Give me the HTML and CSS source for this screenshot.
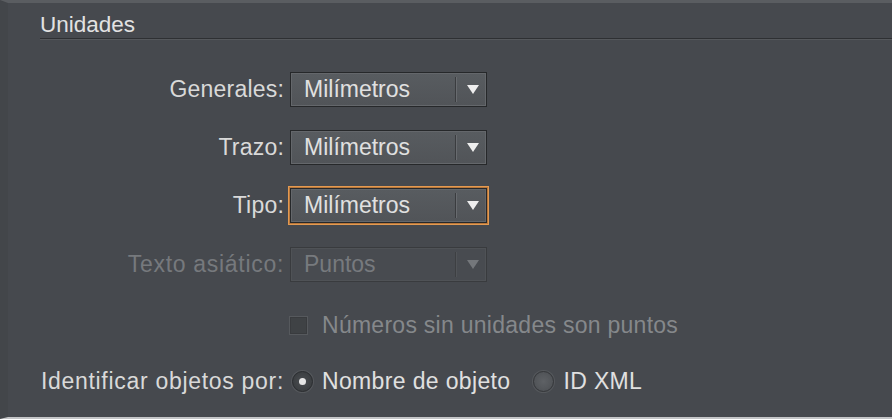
FILE: index.html
```html
<!DOCTYPE html>
<html lang="es">
<head>
<meta charset="utf-8">
<title>Unidades</title>
<link rel="stylesheet" href="styles.css">
</head>
<body>
<div class="panel">
  <div class="header"><span class="title">Unidades</span></div>
  <div class="form">
    <div class="row r1">
      <span class="label">Generales:</span>
      <div class="select"><span class="value">Milímetros</span><span class="arrow-cell"><span class="arrow"></span></span></div>
    </div>
    <div class="row r2">
      <span class="label">Trazo:</span>
      <div class="select"><span class="value">Milímetros</span><span class="arrow-cell"><span class="arrow"></span></span></div>
    </div>
    <div class="row r3">
      <span class="label">Tipo:</span>
      <div class="select focused"><span class="value">Milímetros</span><span class="arrow-cell"><span class="arrow"></span></span></div>
    </div>
    <div class="row r4 disabled">
      <span class="label asian">Texto asiático:</span>
      <div class="select"><span class="value">Puntos</span><span class="arrow-cell"><span class="arrow"></span></span></div>
    </div>
    <div class="row r5 disabled">
      <span class="label"></span>
      <span class="checkbox"></span>
      <span class="check-text">Números sin unidades son puntos</span>
    </div>
    <div class="row r6">
      <span class="label wide">Identificar objetos por:</span>
      <span class="radio checked"></span>
      <span class="radio-text">Nombre de objeto</span>
      <span class="radio second"></span>
      <span class="radio-text">ID XML</span>
    </div>
  </div>
</div>
</body>
</html>
```

FILE: styles.css
```css
html, body {
  margin: 0;
  padding: 0;
  background: #46494e;
}

body {
  width: 892px;
  height: 419px;
  overflow: hidden;
  font-family: "Liberation Sans", Arial, sans-serif;
  font-size: 23px;
  color: #dcdcdc;
}

.panel {
  height: 414px;
  border-top: 3px solid #5a5d61;
  border-bottom: 2px solid #c4c5c7;
  border-left: 8px solid #43464a;
  background: #46494e;
}

.header {
  margin-left: 32px;
  padding-top: 8px;
  padding-bottom: 1px;
  height: 26px;
  line-height: 26px;
  border-bottom: 1px solid #2e3033;
  box-shadow: 0 1px 0 #55585c;
}

.title {
  font-size: 22.5px;
  color: #e2e2e2;
}

.form {
  padding-top: 33px;
}

.row {
  display: flex;
  align-items: center;
  height: 35px;
}

.r2, .r3 { margin-top: 23px; }
.r4 { margin-top: 24px; }
.r5 { margin-top: 26px; }
.r6 { margin-top: 21px; }

.label {
  width: 244px;
  margin-left: 32px;
  margin-right: 6px;
  text-align: right;
  white-space: nowrap;
  color: #d9d9d9;
  letter-spacing: 0.2px;
}

.label.wide {
  letter-spacing: 0.7px;
}

.label.asian {
  letter-spacing: 0.7px;
}

.select {
  box-sizing: border-box;
  width: 197px;
  height: 35px;
  display: flex;
  align-items: center;
  background: linear-gradient(#585c60, #515458);
  border: 1px solid #26282a;
  box-shadow: inset 0 0 0 1px #64676b;
}

.select.focused {
  box-shadow: inset 0 0 0 1px #64676b, 0 0 0 1px #b9773a, 0 0 0 2px #e39a52;
}

.value {
  flex: 1;
  padding-left: 13px;
  color: #e0e0e0;
}

.arrow-cell {
  width: 30px;
  height: 25px;
  border-left: 1px solid #3a3c3f;
  box-shadow: inset 1px 0 0 #686b6f;
  display: flex;
  align-items: center;
  justify-content: center;
}

.arrow {
  width: 0;
  height: 0;
  border-left: 6px solid transparent;
  border-right: 6px solid transparent;
  border-top: 9px solid #eeeeee;
  margin-left: 3px;
}

.disabled .label {
  color: #76797d;
}

.disabled .select {
  background: #484b50;
  border-color: #393b3e;
  box-shadow: inset 0 0 0 1px #4f5256;
}

.disabled .value {
  color: #777a7e;
}

.disabled .arrow-cell {
  border-left-color: #3d3f42;
  box-shadow: inset 1px 0 0 #515458;
}

.disabled .arrow {
  border-top-color: #74777b;
}

.checkbox {
  box-sizing: border-box;
  width: 19px;
  height: 19px;
  margin-left: -1px;
  background: #3f4245;
  border: 1px solid #56595d;
  box-shadow: inset 0 0 0 1px #393b3e;
}

.check-text {
  margin-left: 14px;
  color: #85888b;
  letter-spacing: 0.27px;
}

.radio {
  box-sizing: border-box;
  width: 21px;
  height: 21px;
  margin-left: 2px;
  border-radius: 50%;
  background: radial-gradient(circle, #4b4e52 0, #3c3f42 70%);
  border: 1px solid #2b2d30;
  box-shadow: 0 0 0 1px #55585c;
  display: flex;
  align-items: center;
  justify-content: center;
}

.radio.checked::after {
  content: "";
  width: 7px;
  height: 7px;
  border-radius: 50%;
  background: #e6e6e6;
}

.radio.second {
  margin-left: 23px;
  background: radial-gradient(circle, #5e6165 0, #505357 75%);
  border-color: #36383b;
}

.radio-text {
  margin-left: 9px;
  color: #e0e0e0;
  letter-spacing: 0.35px;
}
```
